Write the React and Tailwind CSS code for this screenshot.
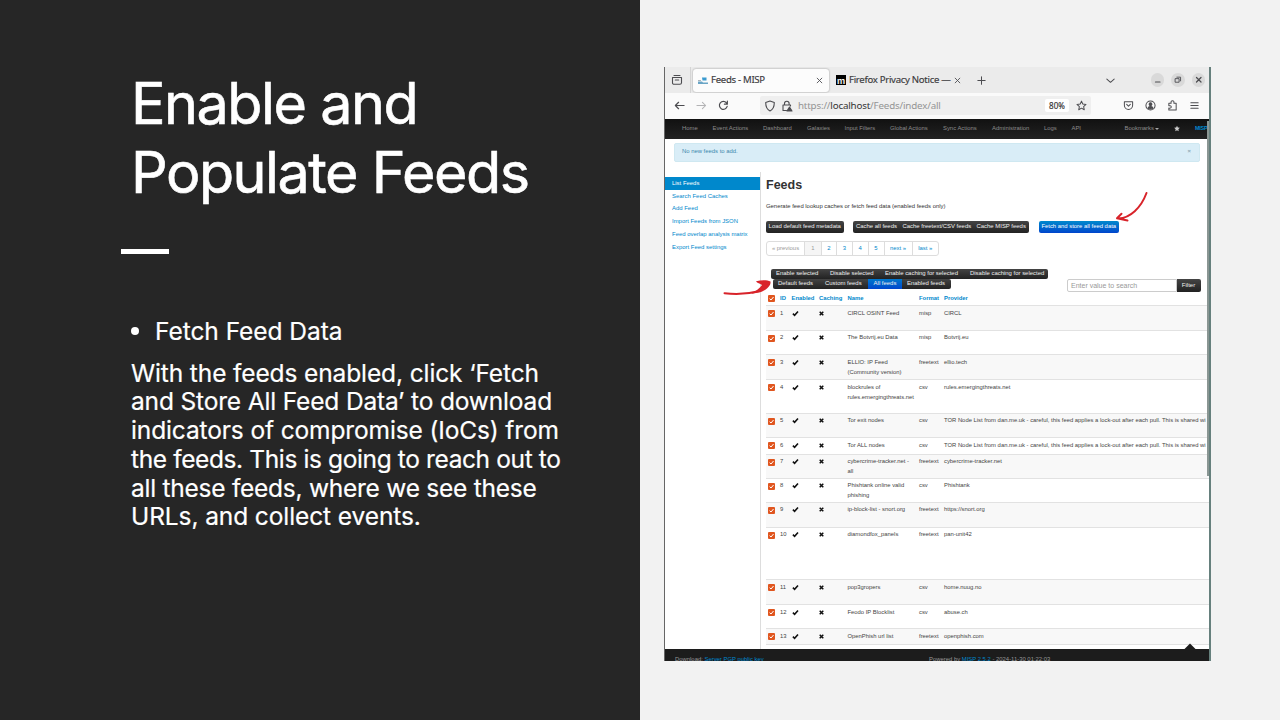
import React from "react";

const menu = [
  ["Home", "w-[30.5px]"],
  ["Event Actions", "w-[50.5px]"],
  ["Dashboard", "w-[44px]"],
  ["Galaxies", "w-[37.5px]"],
  ["Input Filters", "w-[45.5px]"],
  ["Global Actions", "w-[53px]"],
  ["Sync Actions", "w-[49px]"],
  ["Administration", "w-[52px]"],
  ["Logs", "w-[27.5px]"],
  ["API", "w-[53px]"],
];

const side = ["Search Feed Caches", "Add Feed", "Import Feeds from JSON", "Feed overlap analysis matrix", "Export Feed settings"];

const paragraph = [
  ["With the feeds enabled, click ‘Fetch", "tracking-[-0.12px]"],
  ["and Store All Feed Data’ to download", "tracking-[-0.16px]"],
  ["indicators of compromise (IoCs) from", "tracking-[-0.13px]"],
  ["the feeds. This is going to reach out to", "tracking-[-0.38px]"],
  ["all these feeds, where we see these", "tracking-[-0.25px]"],
  ["URLs, and collect events.", "tracking-[-0.1px]"],
];

const tor = "TOR Node List from dan.me.uk - careful, this feed applies a lock-out after each pull. This is shared wi";

const rows = [
  [1, "CIRCL OSINT Feed", "misp", "CIRCL", "h-[24.5px]"],
  [2, "The Botvrij.eu Data", "misp", "Botvrij.eu", "h-[24.5px]"],
  [3, "ELLIO: IP Feed\n(Community version)", "freetext", "ellio.tech", "h-[25px]"],
  [4, "blockrules of\nrules.emergingthreats.net", "csv", "rules.emergingthreats.net", "h-[33.5px]"],
  [5, "Tor exit nodes", "csv", tor, "h-[24.5px]"],
  [6, "Tor ALL nodes", "csv", tor, "h-[16.5px]"],
  [7, "cybercrime-tracker.net -\nall", "freetext", "cybercrime-tracker.net", "h-[24px]"],
  [8, "Phishtank online valid\nphishing", "csv", "Phishtank", "h-[24px]"],
  [9, "ip-block-list - snort.org", "freetext", "https://snort.org", "h-[25px]"],
  [10, "diamondfox_panels", "freetext", "pan-unit42", "h-[52.5px]"],
  [11, "pop3gropers", "csv", "home.nuug.no", "h-[25px]"],
  [12, "Feodo IP Blocklist", "csv", "abuse.ch", "h-[24px]"],
  [13, "OpenPhish url list", "freetext", "openphish.com", "h-[15.5px]"],
  [14, "firehol_level1", "freetext", "iplists.firehol.org", "h-[16px]"],
];

const cols = "grid grid-cols-[14px_11.5px_27.5px_28.5px_71.5px_25px_1fr]";

function Checkbox() {
  return (
    <svg className="ml-[2px] mt-[2.5px] h-[7px] w-[7px]" viewBox="0 0 7 7">
      <rect width="7" height="7" rx="1" fill="#e0561f" />
      <path d="M1.6 3.7 3 5 5.5 2" fill="none" stroke="#fff" strokeWidth="1" />
    </svg>
  );
}

function Check() {
  return (
    <svg className="mt-[2px] h-[7px] w-[7px]" viewBox="0 0 7 7">
      <path d="M.9 3.6 2.6 5.3 6 1.5" fill="none" stroke="#111" strokeWidth="1.6" />
    </svg>
  );
}

function Cross() {
  return (
    <svg className="mt-[3px] h-[5px] w-[5px]" viewBox="0 0 5 5">
      <path d="M.7.7 4.3 4.3M4.3.7.7 4.3" fill="none" stroke="#111" strokeWidth="1.5" />
    </svg>
  );
}

function Icon({ className, children }) {
  return (
    <svg className={`${className} shrink-0`} viewBox="0 0 12 12" fill="none" stroke="#4c4c50" strokeWidth="1.1" strokeLinecap="round" strokeLinejoin="round">
      {children}
    </svg>
  );
}

function TabBar() {
  return (
    <div className="flex h-[26px] items-center bg-[#ebebeb] text-[9.6px] tracking-[-0.3px] text-[#3a3a3c] [-webkit-text-stroke:0.15px_#3a3a3c]">
      <div className="flex h-full w-[27px] items-center border-r border-[#d5d5d5] pl-[7px]">
        <Icon className="h-[12px] w-[12px]">
          <path d="M3 1.5h6M1.5 3.500h9v5.200c0 1-.6 1.600-1.600 1.600H3.100c-1 0-1.600-.6-1.600-1.600zM4.300 6h3.400" />
        </Icon>
      </div>
      <div className="ml-[2px] flex h-[23px] w-[136px] items-center rounded-[3px] bg-[#fcfcfc] pl-[5px] shadow-[0_0_2px_rgba(0,0,0,0.4)]">
        <svg className="h-[11px] w-[10px]" viewBox="0 0 10 11">
          <path d="M4 2.500h4.500v3H4.500z" fill="#3b9bd0" />
          <path d="M0 6.500h4l1 1h5v1.500H0z" fill="#6aa5c6" />
          <path d="M0 5h3v1H0z" fill="#a9b3b9" />
        </svg>
        <span className="ml-[3px] w-[104.500px] whitespace-nowrap">Feeds - MISP</span>
        <Icon className="h-[7px] w-[7px]"><path d="M2 2 10 10M10 2 2 10" strokeWidth="1.500" /></Icon>
      </div>
      <div className="ml-[7px] flex h-[10px] w-[10px] items-center justify-center bg-black font-[Inter] text-[9px] font-bold leading-none text-white">m</div>
      <span className="ml-[3px] w-[105px] whitespace-nowrap">Firefox Privacy Notice —</span>
      <Icon className="h-[7px] w-[7px]"><path d="M2 2 10 10M10 2 2 10" strokeWidth="1.500" /></Icon>
      <Icon className="ml-[14.500px] h-[11px] w-[11px]"><path d="M6 2v8M2 6h8" /></Icon>
      <Icon className="ml-[118px] h-[11px] w-[11px]"><path d="M2 4.500 6 8 10 4.500" /></Icon>
      <div className="ml-[35px] flex gap-[7px]">
        <div className="h-[13.500px] w-[13.500px] rounded-full bg-[#d9d9d9]"><Icon className="h-full w-full"><path d="M4 8h4" /></Icon></div>
        <div className="h-[13.500px] w-[13.500px] rounded-full bg-[#d9d9d9]"><Icon className="h-full w-full"><path d="M4 5h3.200v3.200H4zM5.200 3.700h3.300V7" strokeWidth=".8" /></Icon></div>
        <div className="h-[13.500px] w-[13.500px] rounded-full bg-[#d9d9d9]"><Icon className="h-full w-full"><path d="M4 4 8 8M8 4 4 8" /></Icon></div>
      </div>
    </div>
  );
}

function Toolbar() {
  return (
    <div className="flex h-[25.500px] items-center bg-[#fafafa]">
      <Icon className="ml-[10px] h-[11px] w-[11px]"><path d="M11 6H1.500M5 2.500 1.500 6 5 9.500" strokeWidth="1.300" /></Icon>
      <Icon className="ml-[11px] h-[11px] w-[11px] opacity-40"><path d="M1 6h9.500M7 2.500 10.500 6 7 9.500" /></Icon>
      <Icon className="ml-[11px] h-[11px] w-[11px]"><path d="M10 7A4.300 4.300 0 1 1 9.200 3.200M10.200 1.200v3.300H7" strokeWidth="1.300" /></Icon>
      <div className="ml-[31px] flex h-[19px] w-[331px] items-center rounded-[2px] bg-[#efefef]">
        <Icon className="ml-[4px] h-[12px] w-[12px]"><path d="M6 1 10.300 2.500C10.300 6.500 9 9.500 6 11 3 9.500 1.700 6.500 1.700 2.500z" /></Icon>
        <Icon className="ml-[5px] h-[12px] w-[12px]">
          <path d="M3.500 5V3.500a2.300 2.300 0 0 1 4.600 0V5M5.500 10.500H2V5h7.500v1" />
          <path d="M8.500 7 11 11H6z" fill="#4c4c50" />
        </Icon>
        <span className="ml-[5px] w-[247px] whitespace-nowrap text-[9.800px] leading-none tracking-[-0.180px] text-[#949494]">
          https://<span className="text-[#333]">localhost</span>/Feeds/index/all
        </span>
        <span className="flex h-[13px] w-[24px] items-center justify-center rounded-[2px] bg-white text-[8px] text-[#333] [-webkit-text-stroke:0.15px_#333]">80%</span>
        <Icon className="ml-[7px] h-[11px] w-[11px]"><path d="M6 1.200 7.400 4.400 10.900 4.800 8.300 7.100 9 10.600 6 8.900 3 10.600 3.700 7.100 1.100 4.800 4.600 4.400z" /></Icon>
      </div>
      <Icon className="ml-[32px] h-[11px] w-[11px]"><path d="M1.500 1.800h9v4a4.500 4.500 0 0 1-9 0zM4 4.800 6 6.700 8 4.800" /></Icon>
      <Icon className="ml-[11px] h-[11px] w-[11px]">
        <circle cx="6" cy="6" r="5" />
        <circle cx="6" cy="4.600" r="1.500" fill="#4c4c50" />
        <path d="M3.300 8.800c.4-2.200 5-2.200 5.400 0-1.500 1.500-4 1.500-5.400 0z" fill="#4c4c50" />
      </Icon>
      <Icon className="ml-[11px] h-[11px] w-[11px]"><path d="M2 3.500h2.500C4 1.500 5 .8 6 .8s2 .7 1.500 2.700H10V11H2V8.800c2 .3 2.600-.4 2.600-1.300S4 6 2 6.300z" /></Icon>
      <Icon className="ml-[10.500px] h-[11px] w-[11px]"><path d="M2 3h8M2 6h8M2 9h8" /></Icon>
    </div>
  );
}

function NavBar() {
  return (
    <div className="flex h-[20.500px] items-center overflow-hidden bg-gradient-to-b from-[#111] to-[#222] pl-[18px] text-[5.900px] leading-none text-[#8c8c8c]">
      {menu.map(([label, w]) => (
        <span key={label} className={`${w} shrink-0 whitespace-nowrap`}>{label}</span>
      ))}
      <span className="flex w-[49.500px] shrink-0 items-center gap-[1.500px] whitespace-nowrap">
        Bookmarks <span className="h-0 w-0 border-x-[2px] border-t-[2.500px] border-x-transparent border-t-[#aaa]" />
      </span>
      <svg className="h-[7px] w-[6px] shrink-0" viewBox="0 0 12 12"><path d="M6 .5 7.700 4.200 11.700 4.700 8.700 7.500 9.500 11.500 6 9.500 2.500 11.500 3.300 7.500.3 4.700 4.300 4.200z" fill="#ccc" /></svg>
      <span className="ml-[15px] shrink-0 text-[5.600px] font-bold tracking-[-0.300px] text-[#0088cc]">MISP</span>
    </div>
  );
}

const dark = "flex items-center bg-gradient-to-b from-[#444] to-[#222] text-[#f0f0f0] whitespace-nowrap leading-none";

function Feeds() {
  return (
    <div className="h-[477px] min-w-0 flex-1 overflow-hidden border-l border-[#ddd] pl-[5px] text-[6px]">
      <h2 className="mt-[5px] h-[16px] text-[12.500px] font-bold leading-[16px]">Feeds</h2>
      <p className="mt-[9px] h-[8px] whitespace-nowrap text-[5.900px] leading-[8px]">Generate feed lookup caches or fetch feed data (enabled feeds only)</p>
      <div className="mt-[11.500px] flex h-[11.500px] text-[5.950px]">
        <div className={`${dark} w-[77.500px] justify-center rounded-[2px]`}>Load default feed metadata</div>
        <div className={`${dark} ml-[9px] w-[176.500px] rounded-[2px] pl-[3.500px]`}>
          <span className="w-[46.500px]">Cache all feeds</span>
          <span className="w-[74px]">Cache freetext/CSV feeds</span>
          <span>Cache MISP feeds</span>
        </div>
        <div className="ml-[9.500px] flex w-[80.500px] items-center justify-center whitespace-nowrap rounded-[2px] bg-gradient-to-b from-[#0088cc] to-[#0044cc] text-[5.900px] leading-none text-white">Fetch and store all feed data</div>
      </div>
      <div className="mt-[8px] flex h-[15px] w-[173px] rounded-[3px] border border-[#ddd] text-[5.900px] leading-[13px] text-[#0088cc] [&>span]:border-[#ddd] [&>span]:text-center">
        <span className="w-[38px] border-r text-[#999]">« previous</span>
        <span className="w-[17px] border-r bg-[#f5f5f5] text-[#999]">1</span>
        <span className="w-[15px] border-r">2</span>
        <span className="w-[16px] border-r">3</span>
        <span className="w-[15.500px] border-r">4</span>
        <span className="w-[16px] border-r">5</span>
        <span className="w-[28px] border-r">next »</span>
        <span className="w-[25.500px]">last »</span>
      </div>
      <div className="mt-[13.500px] flex h-[23px]">
        <div className="w-[301px] pl-[5px]">
          <div className={`${dark} h-[10px] w-[277px] rounded-[2px] pl-[5px] text-[5.950px]`}>
            <span className="w-[54px]">Enable selected</span>
            <span className="w-[55px]">Disable selected</span>
            <span className="w-[85px]">Enable caching for selected</span>
            <span>Disable caching for selected</span>
          </div>
          <div className={`${dark} ml-[2px] h-[10px] w-[178px] rounded-[2px] pb-[1px] pl-[5px] text-[5.950px]`}>
            <span className="w-[47px]">Default feeds</span>
            <span className="w-[43px]">Custom feeds</span>
            <span className="-mb-[1px] flex h-[10px] w-[34px] justify-center bg-gradient-to-b from-[#0077cc] to-[#0044cc] pt-[1.500px]">All feeds</span>
            <span className="ml-[5px]">Enabled feeds</span>
          </div>
        </div>
        <div className="mt-[9.500px] flex h-[13.500px]">
          <div className="w-[109.500px] rounded-l-[2px] border border-[#ccc] pl-[3px] text-[7px] leading-[11.500px] text-[#999]">Enter value to search</div>
          <div className={`${dark} w-[24px] justify-center rounded-r-[2px] text-[6px]`}>Filter</div>
        </div>
      </div>
      <div className={`${cols} h-[13px] whitespace-nowrap text-[5.900px] font-bold leading-[13px] text-[#0088cc]`}>
        <Checkbox /><span>ID</span><span>Enabled</span><span>Caching</span><span>Name</span><span>Format</span><span>Provider</span>
      </div>
      {rows.map(([id, name, format, provider, h], i) => (
        <div key={id} className={`${cols} ${h} ${i % 2 ? "bg-white" : "bg-[#f8f8f8]"} border-t border-[#e2e2e2] pt-[1.500px] text-[5.870px] leading-[10px] text-[#444]`}>
          <Checkbox />
          <span>{id}</span>
          <Check />
          <Cross />
          <span className="whitespace-pre">{name}</span>
          <span>{format}</span>
          <span className="whitespace-nowrap">{provider}</span>
        </div>
      ))}
    </div>
  );
}

function BrowserWindow() {
  return (
    <div className="relative ml-[24px] mt-[67px] flex h-[593.500px] w-[546.500px] flex-col overflow-hidden bg-white font-['Noto_Sans',sans-serif]">
      <TabBar />
      <Toolbar />
      <div className="flex min-h-0 flex-1 flex-col font-['Liberation_Sans',sans-serif] text-[#333]">
        <NavBar />
        <div className="ml-[10px] mt-[4px] flex h-[19px] w-[526px] shrink-0 items-center justify-between rounded-[2px] border border-[#cfe8f1] bg-[#d9edf7] pb-px pl-[7px] pr-[8px] text-[5.900px] leading-none text-[#3a87ad]">
          <span>No new feeds to add.</span>
          <span className="font-bold text-[#8fa9b5]">×</span>
        </div>
        <div className="mt-[10px] flex h-[477px] shrink-0">
          <div className="w-[96px] shrink-0 pt-[5px] text-[5.950px] text-[#0088cc]">
            <div className="h-[13px] bg-[#0088cc] pl-[8px] leading-[12px] text-white">List Feeds</div>
            {side.map((s) => (
              <div key={s} className="h-[12.750px] whitespace-nowrap pl-[8px] leading-[12px]">{s}</div>
            ))}
          </div>
          <Feeds />
        </div>
        <div className="flex h-[12px] shrink-0 items-start overflow-hidden bg-[#1c1c1c] pl-[11px] pt-[7.500px] text-[5.900px] leading-[7px] text-[#999]">
          <span className="w-[254px] whitespace-nowrap">Download: <span className="text-[#0088cc]">Server PGP public key</span></span>
          <span className="whitespace-nowrap">Powered by <span className="text-[#0088cc]">MISP 2.5.2</span> - 2024-11-30 01:22:03</span>
        </div>
      </div>
      <div className="absolute left-0 top-0 h-full w-px bg-[#666]" />
      <div className="absolute right-0 top-0 h-full w-[1.500px] bg-[#66807d]" />
      <div className="absolute right-[1.500px] top-[54px] h-[355px] w-[2px] bg-[#8a9693]" />
      <svg className="absolute left-0 top-0 h-full w-full" viewBox="664 67 546.5 593.5">
        <path d="M1184 649.500 1190 643.500 1196 649.500z" fill="#1c1c1c" />
        <g fill="none" stroke="#d8232a" strokeWidth="2" strokeLinecap="round" strokeLinejoin="round">
          <path d="M1146.500 193C1141 208 1130 218 1118.500 218.500M1121.500 213.800 1117 218.300 1127.500 220.500" />
          <path d="M724.500 293.200C737 294.800 750 293.500 760 291" />
        </g>
        <path d="M756 281.200C762 280 767 280 770.500 281.500 771 285 768 289 761 292L751 294C756 291 760 288 762 285 760 283.500 757 283 756 281.200z" fill="#d8232a" />
      </svg>
    </div>
  );
}

export default function App() {
  return (
    <div className="flex h-[720px] w-[1280px] overflow-hidden bg-[#f2f2f2]">
      <section className="w-[640px] shrink-0 bg-[#262626] font-[Inter,sans-serif] text-white">
        <h1 className="ml-[131px] mt-[69px] whitespace-nowrap text-[57.500px] leading-[69px] tracking-[-1.500px] [-webkit-text-stroke:0.6px_white]">
          Enable and<br />Populate Feeds
        </h1>
        <div className="ml-[121px] mt-[41.500px] h-[5px] w-[48px] bg-white" />
        <ul className="ml-[131px] mt-[63px] text-[24.500px] leading-[29px] [-webkit-text-stroke:0.2px_white]">
          <li className="flex items-center whitespace-nowrap tracking-[-0.050px]">
            <span className="mr-[16px] h-[8px] w-[8px] rounded-full bg-white" />Fetch Feed Data
          </li>
        </ul>
        <p className="ml-[131px] mt-[13px] whitespace-nowrap text-[24.500px] leading-[28.800px] [-webkit-text-stroke:0.2px_white]">
          {paragraph.map(([line, tracking]) => (
            <span key={line} className={`block ${tracking}`}>{line}</span>
          ))}
        </p>
      </section>
      <main><BrowserWindow /></main>
    </div>
  );
}
